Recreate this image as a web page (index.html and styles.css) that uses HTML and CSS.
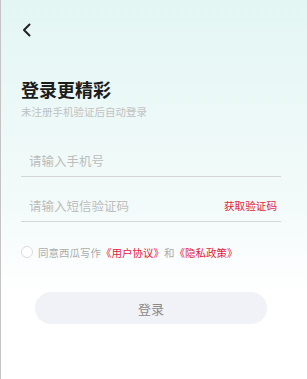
FILE: index.html
```html
<!DOCTYPE html>
<html lang="zh-CN">
<head>
<meta charset="utf-8">
<title>登录</title>
<link rel="stylesheet" href="styles.css">
</head>
<body>
<div class="page">
  <div class="back">
    <svg width="10" height="14" viewBox="0 0 10 14"><path d="M7.5 1.5 L2 7 L7.5 12.5" fill="none" stroke="#222" stroke-width="2" stroke-linecap="round" stroke-linejoin="round"/></svg>
  </div>
  <h1 class="title">登录更精彩</h1>
  <p class="subtitle">未注册手机验证后自动登录</p>
  <div class="field field-phone">
    <span class="placeholder">请输入手机号</span>
  </div>
  <div class="field field-code">
    <span class="placeholder">请输入短信验证码</span>
    <span class="get-code">获取验证码</span>
  </div>
  <div class="agree">
    <span class="radio"></span>
    <span class="agree-text">同意西瓜写作<span class="link">《用户协议》</span>和<span class="link">《隐私政策》</span></span>
  </div>
  <div class="btn">登录</div>
</div>
</body>
</html>
```

FILE: styles.css
```css
html, body {
  margin: 0;
  padding: 0;
}
body {
  width: 307px;
  height: 379px;
  overflow: hidden;
  font-family: "Noto Sans CJK SC", "Noto Sans", sans-serif;
}
.page {
  box-sizing: border-box;
  width: 307px;
  height: 379px;
  border-left: 1px solid #c4c4c4;
  padding: 0 26px 0 20px;
  background: linear-gradient(180deg, #e3f6f4 0%, #f3fbfa 55%, #ffffff 78%);
  display: flex;
  flex-direction: column;
}
.back {
  margin-top: 23px;
  margin-left: 1px;
  height: 14px;
  display: flex;
}
.title {
  margin: 40px 0 0 0;
  font-size: 18px;
  line-height: 24px;
  font-weight: 700;
  color: #1c1c1c;
}
.subtitle {
  margin: 4px 0 0 0;
  font-size: 10.5px;
  line-height: 14px;
  color: #c2c2c2;
}
.field {
  box-sizing: border-box;
  height: 34px;
  padding: 2px 4px 0 8px;
  border-bottom: 1px solid #d6d6d6;
  display: flex;
  align-items: center;
  justify-content: space-between;
}
.field-phone {
  margin-top: 24px;
}
.field-code {
  margin-top: 11px;
}
.placeholder {
  font-size: 12.5px;
  color: #bdbdbd;
}
.get-code {
  font-size: 10.6px;
  color: #e5223c;
}
.agree {
  margin-top: 23px;
  height: 14px;
  display: flex;
  align-items: center;
  gap: 5px;
}
.radio {
  box-sizing: border-box;
  width: 12px;
  height: 12px;
  border: 1px solid #dcdcdc;
  border-radius: 50%;
  background: #fff;
}
.agree-text {
  font-size: 10.5px;
  color: #acacac;
}
.link {
  color: #e5223c;
}
.btn {
  margin: 33px 0 0 14px;
  width: 232px;
  height: 32px;
  border-radius: 16px;
  background: #f1f2f7;
  color: #8a8a8a;
  font-size: 13px;
  display: flex;
  align-items: center;
  justify-content: center;
}
```
